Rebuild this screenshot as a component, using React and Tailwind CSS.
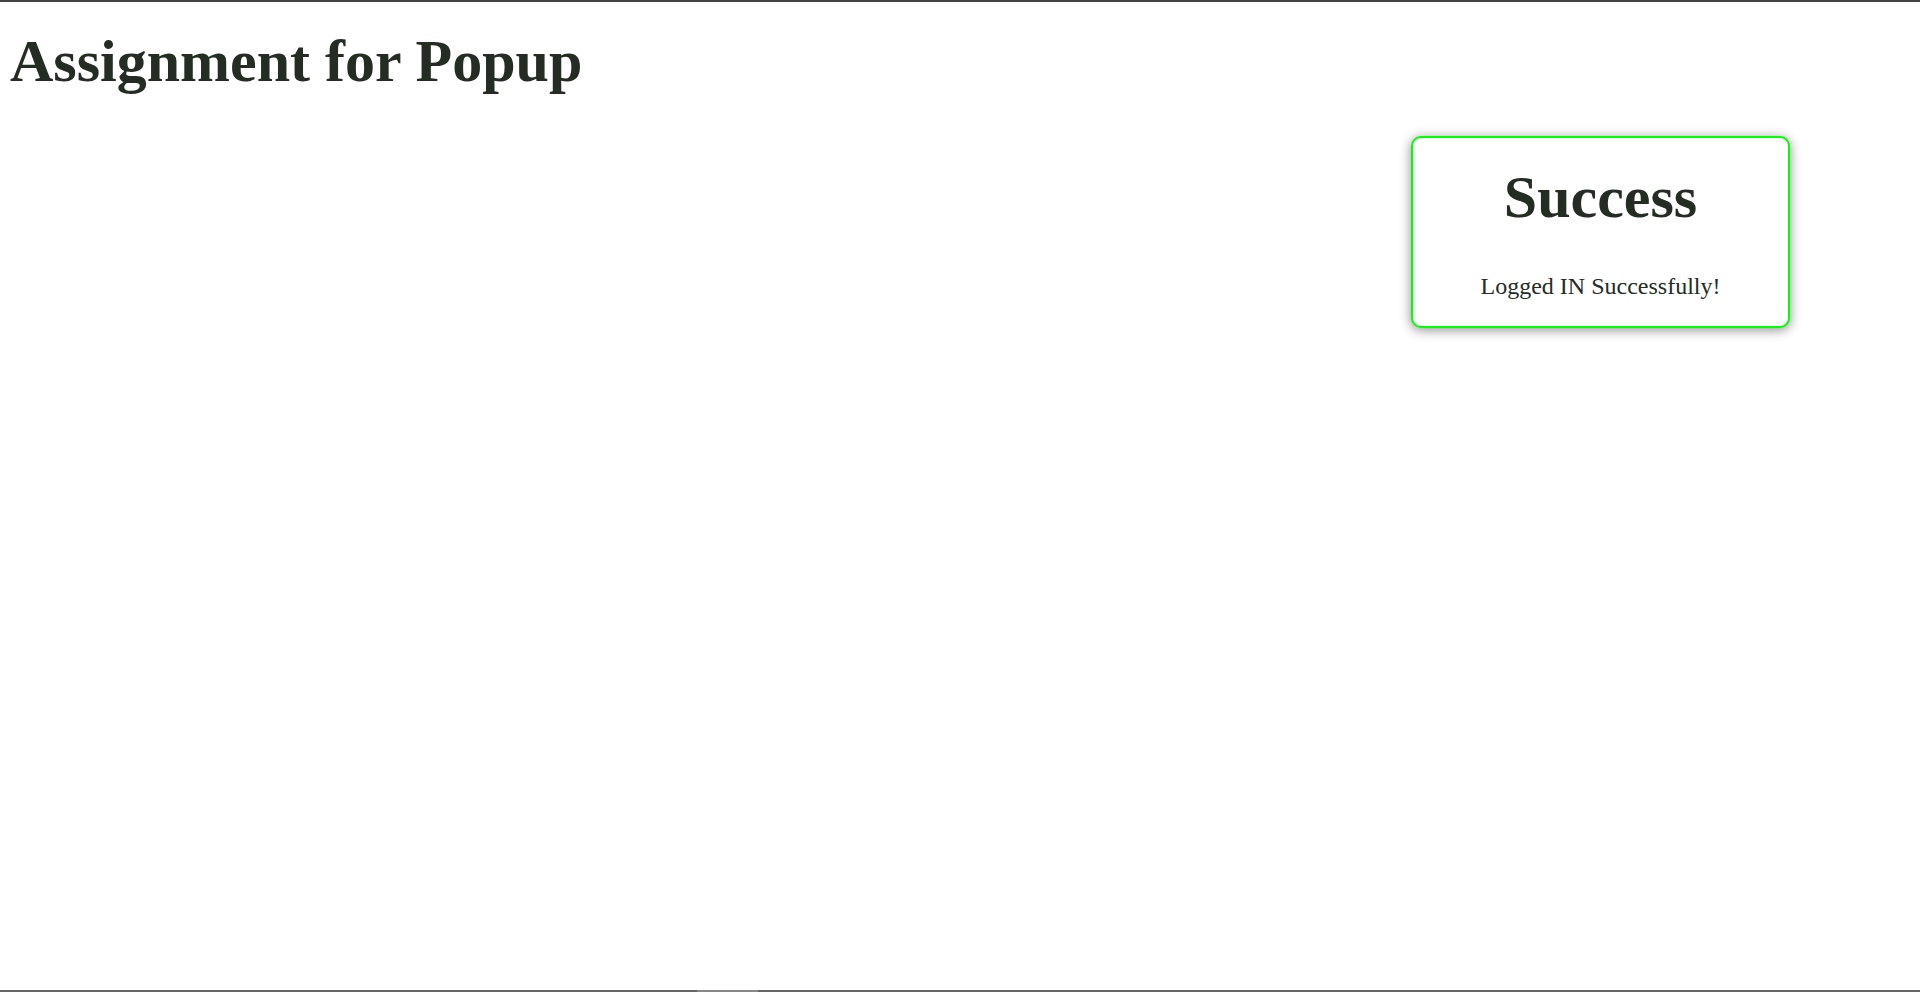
import React from 'react';

export default function App() {
  return (
    <div className="relative h-[992px] w-full overflow-hidden bg-white flex flex-col font-['Liberation_Serif','Times_New_Roman',serif] text-[#242c24]">
      {/* window edge */}
      <div className="h-[2px] w-full bg-[#444]" />

      <main className="flex-1">
        <h1 className="ml-[10px] mt-[29px] text-[60px] leading-none font-bold">Assignment for Popup</h1>
      </main>

      {/* Popup */}
      <div className="absolute left-[1411px] top-[136px] w-[379px] h-[192px] bg-white border-2 border-[#00ff00] rounded-[10px] shadow-[0_2px_12px_rgba(0,0,0,0.45)] flex flex-col items-center pt-[29px]">
        <h2 className="text-[60px] leading-none font-bold">Success</h2>
        <p className="mt-[47px] text-[24px] leading-none">Logged IN Successfully!</p>
      </div>

      {/* bottom edge */}
      <div className="h-[2px] w-full bg-[#666] flex">
        <div className="ml-[697px] w-[61px] h-full bg-[#888]" />
      </div>
    </div>
  );
}
